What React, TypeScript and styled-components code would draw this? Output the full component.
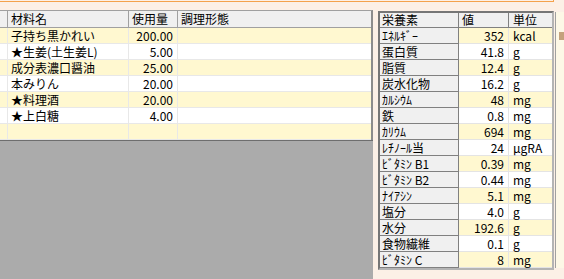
import React from 'react';
import styled, { createGlobalStyle } from 'styled-components';

const Global = createGlobalStyle`
  html, body { margin: 0; padding: 0; background: #fcf0e6; overflow: hidden; }
  body {
    font-family: "Noto Sans CJK JP", "Noto Sans", sans-serif;
    font-size: 12px;
    color: #000;
  }
  * { box-sizing: border-box; }
`;

const Page = styled.div`
  width: 564px;
  height: 279px;
  display: flex;
  flex-direction: column;
  background: #fcf0e6;
  overflow: hidden;
`;

const TopEdge = styled.div`
  flex: none;
  width: 554px;
  height: 2px;
  border-bottom: 1px solid #f4a24c;
  border-right: 1px solid #f4a24c;
`;

const Body = styled.div`
  flex: 1;
  display: flex;
  padding-top: 8px;
  min-height: 0;
`;

const LeftPane = styled.div`
  width: 373px;
  flex: none;
  display: flex;
  flex-direction: column;
`;

const LeftGrid = styled.div`
  border-top: 1px solid #a0a0a0;
  border-right: 2px solid #8c8c8c;
  display: flex;
  flex-direction: column;
`;

const GrayFill = styled.div`
  flex: 1;
  background: #ababab;
  border-top: 1px solid #6e6e6e;
`;

const LRow = styled.div<{ $header?: boolean; $alt?: boolean }>`
  display: flex;
  height: ${p => (p.$header ? 17 : 16)}px;
  line-height: ${p => (p.$header ? 16 : 15)}px;
  background: ${p => (p.$header ? '#f0f0f0' : p.$alt ? '#fff8d0' : '#ffffff')};
  border-bottom: 1px solid ${p => (p.$header ? '#a0a0a0' : '#e8e8e8')};
`;

const LCell = styled.div<{ $w?: number; $header?: boolean; $num?: boolean }>`
  ${p => (p.$w ? `width: ${p.$w}px; flex: none;` : 'flex: 1;')}
  border-right: 1px solid ${p => (p.$header ? '#a0a0a0' : '#e8e8e8')};
  padding: 0 ${p => (p.$num ? 4 : 2)}px 0 3px;
  text-align: ${p => (p.$num ? 'right' : 'left')};
  white-space: nowrap;
  &:last-child { border-right: none; }
`;

const Splitter = styled.div`
  width: 5px;
  flex: none;
`;

const RightPane = styled.div`
  width: 176px;
  flex: none;
  padding-top: 1px;
`;

const RightGrid = styled.div`
  border: 2px solid;
  border-color: #767676 #b4b4b4 #b4b4b4 #767676;
  background: #ffffff;
`;

const RRow = styled.div<{ $header?: boolean; $alt?: boolean }>`
  display: flex;
  height: ${p => (p.$header ? 15 : 16)}px;
  line-height: ${p => (p.$header ? 14 : 15)}px;
  background: ${p => (p.$alt ? '#fff8d0' : '#ffffff')};
`;

const NameCell = styled.div`
  width: 79px;
  flex: none;
  background: #f0f0f0;
  border-right: 1px solid #808080;
  border-bottom: 1px solid #808080;
  padding-left: 2px;
  white-space: nowrap;
`;

const ValueCell = styled.div<{ $header?: boolean }>`
  width: 50px;
  flex: none;
  background: ${p => (p.$header ? '#f0f0f0' : 'transparent')};
  border-right: 1px solid ${p => (p.$header ? '#808080' : '#e4e4e4')};
  border-bottom: 1px solid ${p => (p.$header ? '#808080' : '#e4e4e4')};
  padding: 0 4px 0 3px;
  text-align: ${p => (p.$header ? 'left' : 'right')};
  white-space: nowrap;
`;

const UnitCell = styled.div<{ $header?: boolean }>`
  flex: 1;
  background: ${p => (p.$header ? '#f0f0f0' : 'transparent')};
  border-bottom: 1px solid ${p => (p.$header ? '#808080' : '#e4e4e4')};
  padding-left: 4px;
  white-space: nowrap;
`;

const Sliver = styled.div`
  width: 10px;
  flex: none;
  padding: 2px 0 11px 1px;
  display: flex;
  flex-direction: column;
`;

const SliverBody = styled.div`
  flex: 1;
  border-left: 1px solid #a0a0a0;
  background: #fdf8e6;
  display: flex;
  flex-direction: column;
  align-items: flex-end;
`;

const SliverMark = styled.div`
  margin-top: 20px;
  width: 5px;
  height: 8px;
  background: #c4a27c;
`;

const ingredients: [string, string][] = [
  ['子持ち黒かれい', '200.00'],
  ['★生姜(土生姜L)', '5.00'],
  ['成分表濃口醤油', '25.00'],
  ['本みりん', '20.00'],
  ['★料理酒', '20.00'],
  ['★上白糖', '4.00'],
  ['', ''],
];

const nutrients: [string, string, string][] = [
  ['ｴﾈﾙｷﾞｰ', '352', 'kcal'],
  ['蛋白質', '41.8', 'g'],
  ['脂質', '12.4', 'g'],
  ['炭水化物', '16.2', 'g'],
  ['ｶﾙｼｳﾑ', '48', 'mg'],
  ['鉄', '0.8', 'mg'],
  ['ｶﾘｳﾑ', '694', 'mg'],
  ['ﾚﾁﾉｰﾙ当', '24', 'μgRA'],
  ['ﾋﾞﾀﾐﾝ B1', '0.39', 'mg'],
  ['ﾋﾞﾀﾐﾝ B2', '0.44', 'mg'],
  ['ﾅｲｱｼﾝ', '5.1', 'mg'],
  ['塩分', '4.0', 'g'],
  ['水分', '192.6', 'g'],
  ['食物繊維', '0.1', 'g'],
  ['ﾋﾞﾀﾐﾝ C', '8', 'mg'],
];

export default function App() {
  return (
    <Page>
      <Global />
      <TopEdge />
      <Body>
        <LeftPane>
          <LeftGrid>
            <LRow $header>
              <LCell $w={8} $header />
              <LCell $w={121} $header>材料名</LCell>
              <LCell $w={49} $header>使用量</LCell>
              <LCell $header>調理形態</LCell>
            </LRow>
            {ingredients.map(([name, qty], i) => (
              <LRow key={i} $alt={i % 2 === 0}>
                <LCell $w={8} />
                <LCell $w={121}>{name}</LCell>
                <LCell $w={49} $num>{qty}</LCell>
                <LCell />
              </LRow>
            ))}
          </LeftGrid>
          <GrayFill />
        </LeftPane>
        <Splitter />
        <RightPane>
          <RightGrid>
            <RRow $header>
              <NameCell>栄養素</NameCell>
              <ValueCell $header>値</ValueCell>
              <UnitCell $header>単位</UnitCell>
            </RRow>
            {nutrients.map(([name, val, unit], i) => (
              <RRow key={name} $alt={i % 2 === 0}>
                <NameCell>{name}</NameCell>
                <ValueCell>{val}</ValueCell>
                <UnitCell>{unit}</UnitCell>
              </RRow>
            ))}
          </RightGrid>
        </RightPane>
        <Sliver>
          <SliverBody>
            <SliverMark />
          </SliverBody>
        </Sliver>
      </Body>
    </Page>
  );
}
